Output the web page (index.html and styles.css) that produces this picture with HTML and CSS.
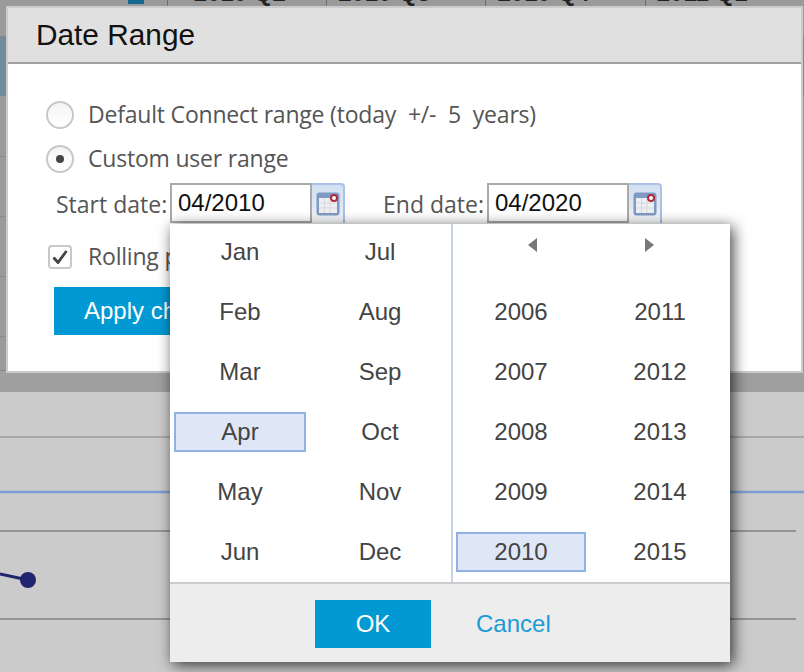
FILE: index.html
```html
<!DOCTYPE html>
<html lang="en">
<head>
    <meta charset="UTF-8">
    <title>Date Range</title>
    <link rel="stylesheet" href="styles.css">
</head>
<body>
    <!-- page behind the modal, dimmed -->
    <div class="backdrop">
        <div class="thead">
            <div class="marker-cell"><span class="marker"></span></div>
            <div class="th th-first">2010 Q2</div>
            <div class="th">2010 Q3</div>
            <div class="th">2010 Q4</div>
            <div class="th">2011 Q1</div>
        </div>
        <div class="trow trow-active"></div>
        <div class="trow"></div>
        <div class="trow"></div>
        <div class="trow"></div>
        <div class="trow"></div>
        <div class="trow trow-short"></div>
        <div class="trow trow-last"></div>
        <svg class="chart" width="804" height="280" viewBox="0 0 804 280">
            <line x1="0" y1="45" x2="804" y2="45" stroke="#a8a8a8" stroke-width="2"/>
            <line x1="0" y1="100" x2="804" y2="100" stroke="#7d9ed2" stroke-width="2.5"/>
            <line x1="0" y1="139" x2="796" y2="139" stroke="#949494" stroke-width="2"/>
            <line x1="0" y1="227" x2="796" y2="227" stroke="#949494" stroke-width="2"/>
            <line x1="0" y1="182" x2="28" y2="188" stroke="#20246e" stroke-width="3"/>
            <circle cx="28" cy="188" r="8" fill="#20246e"/>
        </svg>
    </div>

    <div class="dialog">
        <div class="dialog-title">Date Range</div>
        <div class="dialog-body">
            <div class="radio-row">
                <span class="radio"></span>
                <span class="label">Default Connect range <span class="label-wide">(today +/- 5 years)</span></span>
            </div>
            <div class="radio-row">
                <span class="radio radio-on"></span>
                <span class="label">Custom user range</span>
            </div>
            <div class="dates">
                <span class="date-label">Start date:</span>
                <div class="date-input">04/2010</div>
                <div class="date-btn">
                    <svg width="24" height="24" viewBox="0 0 24 24">
                        <rect x="0.500" y="0.500" width="23" height="23" rx="3" fill="#7f9ac4"/>
                        <rect x="3" y="6" width="18" height="15" fill="#eeeff3"/>
                        <path d="M8.500 6v15M14 6v15M3 11h18M3 16h18" stroke="#d6d9e0" stroke-width="1"/>
                        <circle cx="18" cy="6" r="3" fill="#fff" stroke="#b02a3a" stroke-width="2"/>
                    </svg>
                </div>
                <span class="date-label end-label">End date:</span>
                <div class="date-input">04/2020</div>
                <div class="date-btn">
                    <svg width="24" height="24" viewBox="0 0 24 24">
                        <rect x="0.500" y="0.500" width="23" height="23" rx="3" fill="#7f9ac4"/>
                        <rect x="3" y="6" width="18" height="15" fill="#eeeff3"/>
                        <path d="M8.500 6v15M14 6v15M3 11h18M3 16h18" stroke="#d6d9e0" stroke-width="1"/>
                        <circle cx="18" cy="6" r="3" fill="#fff" stroke="#b02a3a" stroke-width="2"/>
                    </svg>
                </div>
            </div>
            <div class="check-row">
                <span class="checkbox">
                    <svg width="16" height="14" viewBox="0 0 16 14">
                        <path d="M1.500 7.500L6 12.500L14.500 1" fill="none" stroke="#444" stroke-width="2.800"/>
                    </svg>
                </span>
                <span class="label">Rolling period</span>
            </div>
            <button class="btn btn-apply">Apply changes</button>
        </div>
    </div>

    <div class="picker">
        <div class="picker-main">
            <div class="months">
                <div class="cell">Jan</div>
                <div class="cell">Jul</div>
                <div class="cell">Feb</div>
                <div class="cell">Aug</div>
                <div class="cell">Mar</div>
                <div class="cell">Sep</div>
                <div class="cell cell-selected">Apr</div>
                <div class="cell">Oct</div>
                <div class="cell">May</div>
                <div class="cell">Nov</div>
                <div class="cell">Jun</div>
                <div class="cell">Dec</div>
            </div>
            <div class="years">
                <div class="year-nav">
                    <span class="arrow arrow-left"></span>
                    <span class="arrow arrow-right"></span>
                </div>
                <div class="cell">2006</div>
                <div class="cell">2011</div>
                <div class="cell">2007</div>
                <div class="cell">2012</div>
                <div class="cell">2008</div>
                <div class="cell">2013</div>
                <div class="cell">2009</div>
                <div class="cell">2014</div>
                <div class="cell cell-selected">2010</div>
                <div class="cell">2015</div>
            </div>
        </div>
        <div class="picker-footer">
            <button class="btn btn-ok">OK</button>
            <a class="cancel">Cancel</a>
        </div>
    </div>
</body>
</html>
```

FILE: styles.css
```css
* {
    margin: 0;
    padding: 0;
    box-sizing: border-box;
}

body {
    width: 804px;
    height: 672px;
    overflow: hidden;
    position: relative;
    background: #cbcbcb;
    font-family: "Liberation Sans", Arial, sans-serif;
}

.backdrop {
    width: 804px;
}

.thead {
    display: flex;
    height: 37px;
    overflow: hidden;
    background: #9a9a9a;
    border-bottom: 1px solid #8a8a8a;
}

.marker-cell {
    width: 167px;
    padding-left: 128px;
}

.marker {
    display: block;
    width: 16px;
    height: 4px;
    background: #14688f;
}

.th {
    width: 160px;
    padding-left: 11px;
    border-left: 1px solid #6e6e6e;
    font-size: 24px;
    font-weight: bold;
    line-height: 24px;
    color: #222;
}

.th:before {
    content: "";
    display: block;
    margin-top: -19px;
}

.th-first {
    padding-left: 26px;
}

.trow {
    height: 60px;
    background: #9a9a9a;
    border-bottom: 1px solid #8a8a8a;
}

.trow-active {
    background: #6f8c9c;
    border-bottom: 1px solid #9a9a9a;
}

.trow-short {
    height: 34px;
}

.trow-last {
    height: 21px;
    background: #9f9f9f;
    border-bottom: 0;
}

.chart {
    display: block;
}

.dialog {
    position: absolute;
    left: 6px;
    top: 6px;
    width: 797px;
    height: 367px;
    background: #fff;
    border: 2px solid #cbcbcb;
}

.dialog-title {
    height: 56px;
    padding: 11px 0 0 28px;
    background: #e0e0e0;
    border-bottom: 2px solid #a0a0a0;
    font-size: 29.800px;
    line-height: 32px;
    color: #111;
}

.dialog-body {
    padding: 29px 0 0 38px;
}

.label,
.date-label {
    font-family: "Open Sans", sans-serif;
    font-size: 23px;
    color: #555;
}

.label {
    margin-bottom: 2px;
    letter-spacing: -0.2px;
}

.label-wide {
    word-spacing: 6px;
}

.radio-row {
    display: flex;
    align-items: center;
    gap: 14px;
    height: 44px;
}

.radio {
    width: 28px;
    height: 28px;
    border-radius: 50%;
    border: 2px solid #c8c8c8;
    background: linear-gradient(#f4f4f4, #fff);
    display: flex;
    align-items: center;
    justify-content: center;
}

.radio-on:before {
    content: "";
    width: 8px;
    height: 8px;
    border-radius: 50%;
    background: #444;
}

.dates {
    display: flex;
    align-items: flex-start;
    height: 40px;
    margin-top: 2px;
    padding-left: 10px;
}

.date-label {
    width: 114px;
    line-height: 42px;
}

.end-label {
    width: 104px;
    margin-left: 38px;
}

.date-input {
    width: 142px;
    height: 40px;
    border: 2px solid #aaa;
    padding-left: 6px;
    font-size: 24px;
    line-height: 36px;
    color: #111;
    background: #fff;
}

.date-btn {
    width: 33px;
    height: 40px;
    padding: 7px 0 0 4px;
    border-top: 2px solid #a9c3e8;
    border-right: 2px solid #a9c3e8;
    border-radius: 0 4px 0 0;
    background: linear-gradient(#d2e0f2, #e0e8f2 60%, #fff);
}

.check-row {
    display: flex;
    align-items: center;
    gap: 16px;
    height: 24px;
    margin-top: 22px;
    padding-left: 2px;
}

.checkbox {
    width: 24px;
    height: 24px;
    border: 2px solid #c8c8c8;
    border-radius: 4px;
    display: flex;
    align-items: center;
    justify-content: center;
}

.btn {
    border: none;
    background: #0099d3;
    color: #fff;
    font-family: "Liberation Sans", Arial, sans-serif;
    font-size: 24px;
    height: 48px;
}

.btn-apply {
    display: block;
    width: 200px;
    margin: 18px 0 0 8px;
    padding-left: 30px;
    text-align: left;
}

/* month/year popup */
.picker {
    position: absolute;
    left: 170px;
    top: 224px;
    width: 560px;
    height: 438px;
    background: #fff;
    box-shadow: 3px 3px 14px rgba(0, 0, 0, 0.75);
    font-size: 24px;
    color: #444;
}

.picker-main {
    display: flex;
    height: 358px;
}

.months {
    width: 283px;
    padding: 8px 0 0 4px;
    border-right: 2px solid #c6d4e6;
    display: grid;
    grid-template-columns: 132px 132px;
    grid-auto-rows: 40px;
    gap: 20px 8px;
}

.years {
    flex: 1;
    padding: 8px 0 0 3px;
    display: grid;
    grid-template-columns: 130px 130px;
    grid-auto-rows: 40px;
    gap: 20px 9px;
}

.cell {
    display: flex;
    align-items: center;
    justify-content: center;
}

.cell-selected {
    background: #dfe7f7;
    border: 2px solid #90b1e2;
}

.year-nav {
    grid-column: 1 / -1;
    display: flex;
    gap: 108px;
    padding: 6px 0 0 72px;
}

.arrow {
    width: 0;
    height: 0;
    border-top: 7px solid transparent;
    border-bottom: 7px solid transparent;
}

.arrow-left {
    border-right: 9px solid #777;
}

.arrow-right {
    border-left: 9px solid #777;
}

.picker-footer {
    height: 80px;
    border-top: 2px solid #cdcdcd;
    background: #ededed;
    display: flex;
    align-items: flex-start;
    padding: 16px 0 0 145px;
}

.btn-ok {
    width: 116px;
}

.cancel {
    margin-left: 45px;
    line-height: 48px;
    color: #1b9ad6;
}
```
